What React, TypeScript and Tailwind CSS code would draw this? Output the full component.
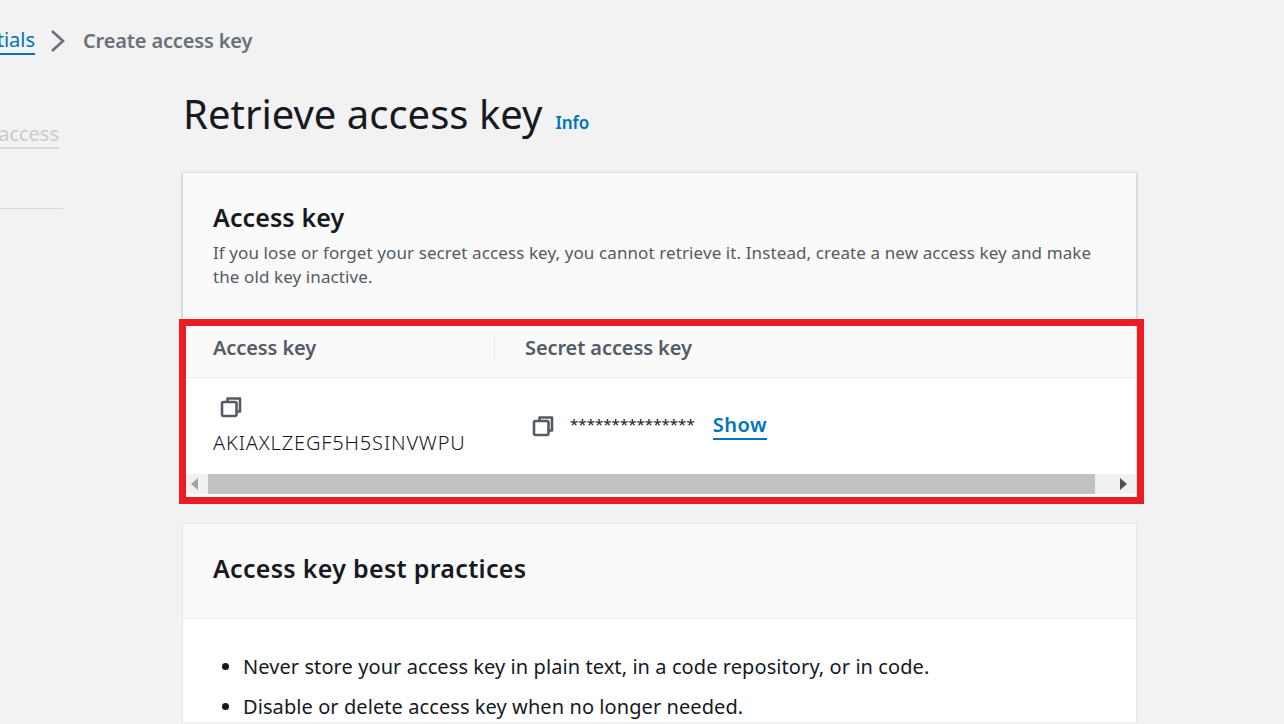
import React from "react";

const font = { fontFamily: '"Noto Sans", "Open Sans", sans-serif' };

const CopyIcon = () => (
  <svg width="22" height="22" viewBox="0 0 22 22" fill="none" stroke="#545b64" strokeWidth="2.6" className="block">
    <path d="M7.5 5V2.5H20V15.5H17" strokeLinejoin="round" />
    <rect x="2" y="6" width="14.5" height="14" rx="1.5" />
  </svg>
);

const App = () => {
  return (
    <main style={font} className="relative h-[724px] w-[1284px] overflow-hidden bg-[#f2f2f2] text-[#16191f]">
      <nav className="flex h-[82px] items-center gap-[15px] pb-[1px]">
        <div className="flex w-[35px] justify-end overflow-hidden">
          <a className="border-b-2 border-[#0073bb] text-[20px] leading-[26px] text-[#0073bb] whitespace-nowrap">Credentials</a>
        </div>
        <svg width="16" height="24" viewBox="0 0 16 24" fill="none" stroke="#687078" strokeWidth="2.6">
          <path d="M2 2l11 10L2 22" />
        </svg>
        <span className="ml-[2px] text-[20px] font-semibold tracking-[-0.15px] text-[#687078]">Create access key</span>
      </nav>

      <div className="flex">
        <aside className="w-[182px] shrink-0">
          <div className="mt-[39px] flex w-[59px] justify-end overflow-hidden">
            <span className="border-b-2 border-[#d5dbdb] text-[20px] leading-[26px] text-[#c8cccc] whitespace-nowrap">Review access</span>
          </div>
          <div className="mt-[59px] h-px w-[63px] bg-[#d5dbdb]" />
        </aside>

        <section className="w-[955px]">
          <header className="flex h-[91px] items-baseline gap-[13px] pt-[3px] pl-[1px]">
            <h1 className="text-[40px] leading-[58px] font-normal">Retrieve access key</h1>
            <a className="text-[17px] font-semibold text-[#0073bb]">Info</a>
          </header>

          <div className="border-x border-[#d5dbdb] bg-white shadow-[0_0_2px_rgba(0,28,36,0.25)]">
            <div className="h-[147px] bg-[#fafafa] px-[30px] pt-[26px]">
              <h2 className="text-[25px] leading-[36px] font-semibold tracking-[0.1px]">Access key</h2>
              <p className="mt-[6px] text-[17px] leading-[24px] tracking-[0.1px] text-[#545b64]">
                If you lose or forget your secret access key, you cannot retrieve it. Instead, create a new access key and make
                <br />
                the old key inactive.
              </p>
            </div>

            <div className="flex h-[58px] items-center border-b border-[#eaeded] bg-[#fafafa] pb-[2px] text-[20px] font-semibold tracking-[-0.1px] text-[#545b64]">
              <div className="w-[311px] pl-[30px]">Access key</div>
              <div className="border-l border-[#eaeded] pl-[30px] leading-[30px]">Secret access key</div>
            </div>

            <div className="flex h-[96px] items-center">
              <div className="w-[311px] pl-[30px]">
                <div className="mb-[12px] ml-[7px]"><CopyIcon /></div>
                <div className="text-[20px] leading-[26px] font-light tracking-[0.85px]">AKIAXLZEGF5H5SINVWPU</div>
              </div>
              <div className="flex items-center pl-[38px]">
                <CopyIcon />
                <span className="mb-[4px] ml-[16px] text-[15px] tracking-[0.05px]">***************</span>
                <a className="ml-[18px] border-b-2 border-[#0073bb] text-[20px] leading-[26px] font-semibold tracking-[0.5px] text-[#0073bb]">Show</a>
              </div>
            </div>

            <div className="flex h-[20px] bg-[#f1f1f1]">
              <div className="flex w-[25px] items-center pl-[8px]">
                <span className="h-0 w-0 border-y-[6px] border-r-[7px] border-y-transparent border-r-[#a3a3a3]" />
              </div>
              <div className="w-[887px] bg-[#c1c1c1]" />
              <div className="flex flex-1 items-center justify-end pr-[9px]">
                <span className="h-0 w-0 border-y-[6px] border-l-[7px] border-y-transparent border-l-[#505050]" />
              </div>
            </div>
            <div className="h-[4px] bg-white" />
          </div>

          <div className="mt-[25px] border-x border-t border-[#e4e6e6] bg-white">
            <div className="flex h-[95px] items-center border-b border-[#eaeded] bg-[#fafafa] px-[30px] pb-[4px]">
              <h2 className="text-[25px] font-semibold tracking-[0.3px]">Access key best practices</h2>
            </div>
            <ul className="list-disc pt-[33px] pl-[60px] text-[20px] leading-[30px] tracking-[0.08px] text-[#16191f]">
              <li className="mb-[10px]">Never store your access key in plain text, in a code repository, or in code.</li>
              <li>Disable or delete access key when no longer needed.</li>
            </ul>
          </div>
        </section>
      </div>

      <div className="pointer-events-none absolute top-[319px] left-[179px] h-[185px] w-[965px] border-[7px] border-[#ed1c24]" />
    </main>
  );
};

export default App;
